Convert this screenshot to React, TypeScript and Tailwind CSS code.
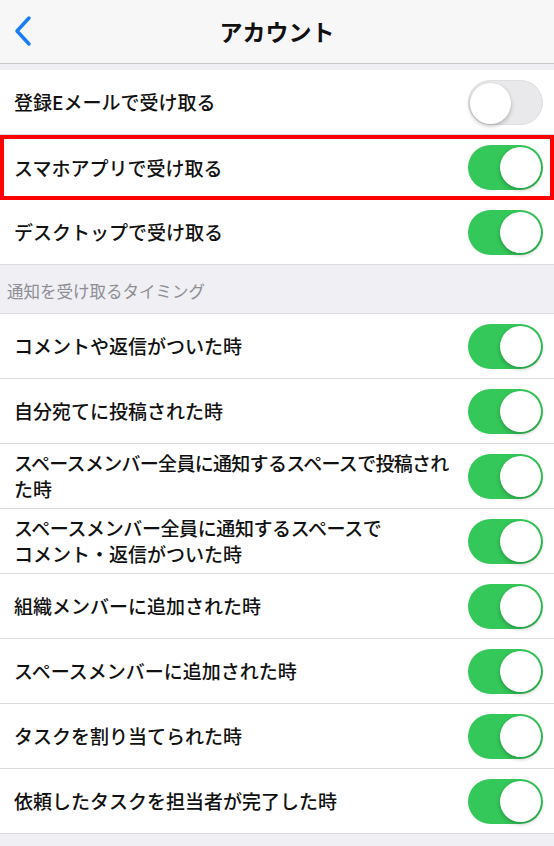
import React from "react";

const font = { fontFamily: '"Noto Sans CJK JP", "Noto Sans", sans-serif' };

type Item = { label: React.ReactNode; on: boolean; highlight?: boolean };

const Toggle: React.FC<{ on: boolean }> = ({ on }) => (
    <div
        className={
            "relative h-[45px] w-[75px] shrink-0 rounded-full " +
            (on ? "bg-[#34c759]" : "bg-[#e9e9eb] border border-[#dedee0]")
        }
    >
        <div
            className={
                "absolute top-[2px] h-[41px] w-[41px] rounded-full bg-white shadow-[0_2px_4px_rgba(0,0,0,0.25)] " +
                (on ? "right-[2px]" : "left-[1px] top-[1px]")
            }
        />
    </div>
);

const Row: React.FC<Item> = ({ label, on, highlight }) => (
    <div
        className={
            "flex h-[65px] items-center justify-between gap-3 bg-white " +
            (highlight ? "border-4 border-[#ff0000] pl-[10px] pr-[7px]" : "border-b border-[#dcdce0] pl-[14px] pr-[11px]")
        }
    >
        <div className="text-[19px] font-medium leading-[26px] text-[#111]">{label}</div>
        <Toggle on={on} />
    </div>
);

const App: React.FC = () => {
    const timing: Item[] = [
        { label: "コメントや返信がついた時", on: true },
        { label: "自分宛てに投稿された時", on: true },
        {
            label: (
                <>
                    <span className="tracking-[-0.7px]">スペースメンバー全員に通知するスペースで投稿され</span>
                    <br />た時
                </>
            ),
            on: true,
        },
        {
            label: (
                <>
                    <span className="tracking-[-0.4px]">スペースメンバー全員に通知するスペースで</span>
                    <br />コメント・返信がついた時
                </>
            ),
            on: true,
        },
        { label: "組織メンバーに追加された時", on: true },
        { label: "スペースメンバーに追加された時", on: true },
        { label: "タスクを割り当てられた時", on: true },
        { label: "依頼したタスクを担当者が完了した時", on: true },
    ];

    return (
        <div className="min-h-[846px] w-[554px] bg-[#efeff4]" style={font}>
            {/* ヘッダー */}
            <header className="relative flex h-[64px] items-center justify-center border-b border-[#c8c7cc] bg-[#f7f7f7]">
                <svg className="absolute left-[13px] top-[15px]" width="20" height="32" viewBox="0 0 20 32">
                    <path d="M16 3 L4 16 L16 29" fill="none" stroke="#1a7df5" strokeWidth="3.5" strokeLinecap="round" strokeLinejoin="round" />
                </svg>
                <h1 className="text-[23px] font-bold text-[#111]">アカウント</h1>
            </header>

            <div className="h-[6px]" />

            <Row label="登録Eメールで受け取る" on={false} />
            <Row label="スマホアプリで受け取る" on={true} highlight />
            <Row label="デスクトップで受け取る" on={true} />

            {/* セクション見出し */}
            <div className="flex h-[48px] items-end pb-[9px] pl-[7px] text-[16.5px] text-[#8e8e93]">
                通知を受け取るタイミング
            </div>

            <div className="border-t border-[#dcdce0]">
                {timing.map((item, i) => (
                    <Row key={i} label={item.label} on={item.on} />
                ))}
            </div>
        </div>
    );
};

export default App;
